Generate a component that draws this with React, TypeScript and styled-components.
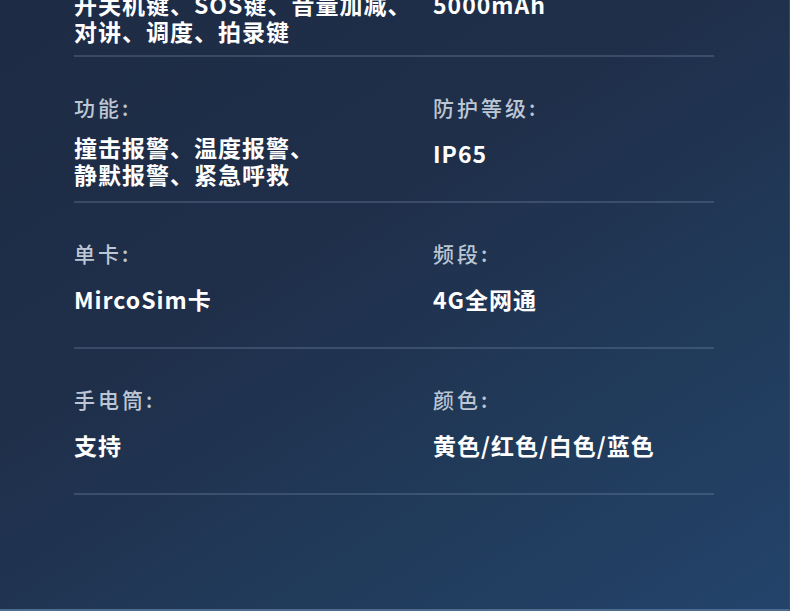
import React from 'react';
import styled, { createGlobalStyle } from 'styled-components';

const GlobalStyle = createGlobalStyle`
  html, body {
    margin: 0;
    padding: 0;
    background: #1f2d46;
  }
  * {
    box-sizing: border-box;
  }
`;

type Spec = {
  label?: string;
  value: string[];
};

type SpecRow = [Spec, Spec];

const rows: SpecRow[] = [
  [
    { value: ['开关机键、SOS键、音量加减、', '对讲、调度、拍录键'] },
    { value: ['5000mAh'] },
  ],
  [
    { label: '功能:', value: ['撞击报警、温度报警、', '静默报警、紧急呼救'] },
    { label: '防护等级:', value: ['IP65'] },
  ],
  [
    { label: '单卡:', value: ['MircoSim卡'] },
    { label: '频段:', value: ['4G全网通'] },
  ],
  [
    { label: '手电筒:', value: ['支持'] },
    { label: '颜色:', value: ['黄色/红色/白色/蓝色'] },
  ],
];

const Page = styled.div`
  width: 790px;
  height: 611px;
  overflow: hidden;
  background: linear-gradient(148deg, #1e2b44 0%, #1f2f4a 40%, #213b5b 72%, #23436a 100%);
  border-right: 1px solid #2f4a69;
  border-bottom: 2px solid #4d6c8e;
  font-family: 'Noto Sans CJK SC', 'Noto Sans', sans-serif;
`;

const Table = styled.div`
  width: 640px;
  margin: -9px 0 0 74px;
`;

const Row = styled.div<{ $head?: boolean }>`
  display: grid;
  grid-template-columns: 359px 1fr;
  height: ${(p) => (p.$head ? '66px' : '146px')};
  border-bottom: 2px solid rgba(122, 142, 172, 0.3);
`;

const Cell = styled.div<{ $head?: boolean }>`
  display: flex;
  flex-direction: column;
  padding-top: ${(p) => (p.$head ? '0' : '37px')};
`;

const Label = styled.div`
  font-size: 21px;
  line-height: 27px;
  letter-spacing: 3px;
  font-weight: 500;
  color: #bcc6d4;
`;

const Value = styled.div<{ $gap: number }>`
  margin-top: ${(p) => p.$gap}px;
  font-size: 23px;
  line-height: 27px;
  letter-spacing: 1px;
  font-weight: 700;
  color: #ffffff;
`;

const App = () => {
  return (
    <Page>
      <GlobalStyle />
      <Table>
        {rows.map((row, i) => (
          <Row key={i} $head={i === 0}>
            {row.map((spec, j) => (
              <Cell key={j} $head={i === 0}>
                {spec.label && <Label>{spec.label}</Label>}
                <Value $gap={i === 0 ? 0 : spec.value.length > 1 ? 13 : 19}>
                  {spec.value.map((line) => (
                    <div key={line}>{line}</div>
                  ))}
                </Value>
              </Cell>
            ))}
          </Row>
        ))}
      </Table>
    </Page>
  );
};

export default App;
